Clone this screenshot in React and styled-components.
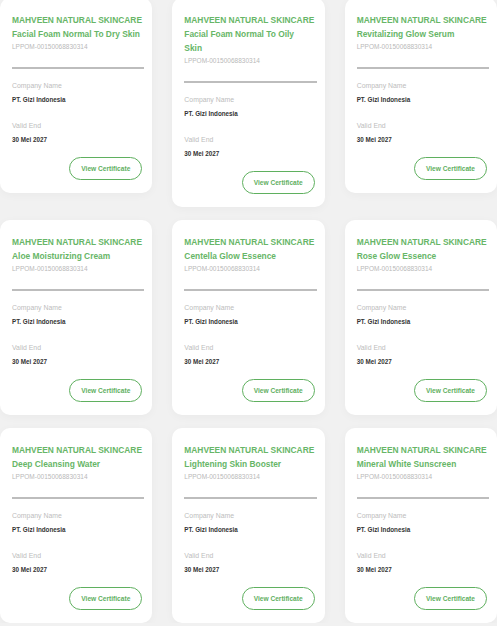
import React from 'react';
import styled, { createGlobalStyle } from 'styled-components';

const GlobalStyle = createGlobalStyle`
  body {
    margin: 0;
    background: #f1f1f1;
    font-family: 'Liberation Sans', Arial, sans-serif;
  }
`;

const Grid = styled.div`
  display: grid;
  grid-template-columns: repeat(3, 1fr);
  column-gap: 20px;
  row-gap: 13px;
  align-items: start;
  width: 497px;
  margin-top: -2px;
`;

const Card = styled.div`
  background: #fff;
  border-radius: 10px;
  box-shadow: 0 2px 10px rgba(0, 0, 0, 0.035);
  padding: 15px 8px 13px 12px;
  display: flex;
  flex-direction: column;
`;

const Title = styled.div`
  color: #67b667;
  font-size: 8.4px;
  font-weight: 700;
  line-height: 14px;
  white-space: pre-line;
`;

const Code = styled.div`
  color: #b9b9b9;
  font-size: 6.5px;
  line-height: 9px;
  margin-top: 1px;
`;

const Divider = styled.div`
  height: 2px;
  background: #bdbdbd;
  margin-top: 16px;
`;

const Label = styled.div`
  color: #bdbdbd;
  font-size: 6.9px;
  line-height: 9px;
  margin-top: ${({ $gap }) => $gap}px;
`;

const Value = styled.div`
  color: #333;
  font-size: 6.3px;
  font-weight: 700;
  line-height: 9px;
  margin-top: 5px;
`;

const Button = styled.button`
  align-self: flex-end;
  margin: 13px 2px 0 0;
  width: 73px;
  height: 23px;
  border: 1px solid #5fb05f;
  border-radius: 12px;
  background: #fff;
  color: #5fb05f;
  font-family: inherit;
  font-size: 6.6px;
  font-weight: 700;
  padding: 0;
`;

const products = [
  'Facial Foam Normal To Dry Skin',
  'Facial Foam Normal To Oily\nSkin',
  'Revitalizing Glow Serum',
  'Aloe Moisturizing Cream',
  'Centella Glow Essence',
  'Rose Glow Essence',
  'Deep Cleansing Water',
  'Lightening Skin Booster',
  'Mineral White Sunscreen',
];

const CertificateCard = ({ name }) => (
  <Card>
    <Title>
      {'MAHVEEN NATURAL SKINCARE\n'}
      {name}
    </Title>
    <Code>LPPOM-00150068830314</Code>
    <Divider />
    <Label $gap={12}>Company Name</Label>
    <Value>PT. Gizi Indonesia</Value>
    <Label $gap={17}>Valid End</Label>
    <Value>30 Mei 2027</Value>
    <Button>View Certificate</Button>
  </Card>
);

export default function App() {
  return (
    <>
      <GlobalStyle />
      <Grid>
        {products.map((p) => (
          <CertificateCard key={p} name={p} />
        ))}
      </Grid>
    </>
  );
}
